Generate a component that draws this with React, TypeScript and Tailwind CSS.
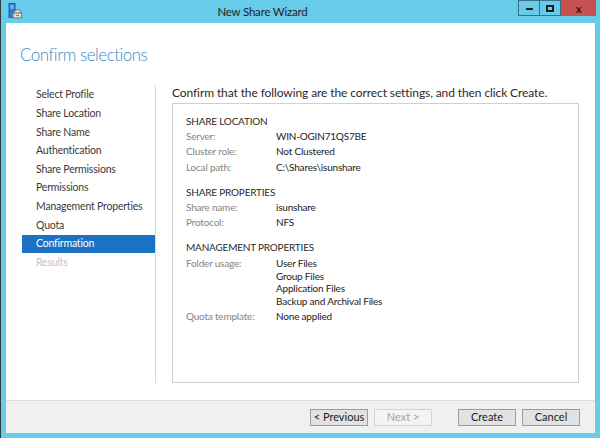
import React from "react";

const font = { fontFamily: 'Lato, "Noto Sans", Arial, sans-serif' };

const steps = [
  "Select Profile",
  "Share Location",
  "Share Name",
  "Authentication",
  "Share Permissions",
  "Permissions",
  "Management Properties",
  "Quota",
  "Confirmation",
  "Results",
];

interface Row {
  label: string;
  values: string[];
}

interface Section {
  title: string;
  rows: Row[];
}

const sections: Section[] = [
  {
    title: "SHARE LOCATION",
    rows: [
      { label: "Server:", values: ["WIN-OGIN71QS7BE"] },
      { label: "Cluster role:", values: ["Not Clustered"] },
      { label: "Local path:", values: ["C:\\Shares\\isunshare"] },
    ],
  },
  {
    title: "SHARE PROPERTIES",
    rows: [
      { label: "Share name:", values: ["isunshare"] },
      { label: "Protocol:", values: ["NFS"] },
    ],
  },
  {
    title: "MANAGEMENT PROPERTIES",
    rows: [
      {
        label: "Folder usage:",
        values: ["User Files", "Group Files", "Application Files", "Backup and Archival Files"],
      },
      { label: "Quota template:", values: ["None applied"] },
    ],
  },
];

const AppIcon = () => (
  <svg width="14" height="16" viewBox="0 0 14 16">
    <rect x="1" y="0.5" width="6" height="14" fill="#2f7fd0" stroke="#1d5fa8" />
    <rect x="2.5" y="2.5" width="3" height="1" fill="#cfe8ff" />
    <rect x="2.5" y="4.5" width="3" height="1" fill="#cfe8ff" />
    <path d="M5 10 L8 7 H12 L13.5 10 Z" fill="#e8e8e8" stroke="#7a7a7a" />
    <rect x="5" y="10" width="8.5" height="5" fill="#d8d8d8" stroke="#7a7a7a" />
    <rect x="8" y="12" width="3" height="1" fill="#7a7a7a" />
  </svg>
);

const Button = ({ label, disabled }: { label: string; disabled?: boolean }) => (
  <div
    className={
      disabled
        ? "flex h-[17px] w-[58px] items-center justify-center whitespace-nowrap border border-[#d3d3d3] bg-[#f4f4f4] text-[11px] text-[#a3a3a3]"
        : "flex h-[17px] w-[58px] items-center justify-center whitespace-nowrap border border-[#9c9c9c] bg-[#e2e2e2] text-[11px] text-[#222]"
    }
  >
    {label}
  </div>
);

export default function App() {
  return (
    <div
      className="flex h-[438px] w-[600px] flex-col overflow-hidden border-l border-[#2d3a40] bg-[#67cbea]"
      style={font}
    >
      {/* title bar */}
      <div className="flex h-[23px] shrink-0 items-start">
        <div className="pl-[7px] pt-[3px]">
          <AppIcon />
        </div>
        <div className="flex-1 pr-[15px] pt-[4px] text-center text-[11.5px] leading-[15px] tracking-[-0.2px] text-[#1e1e1e]">
          New Share Wizard
        </div>
        <div className="flex h-[16px] pr-[4px]">
          <div className="flex w-[21px] items-end justify-center border border-r-0 border-[#3a6f86] pb-[5px]">
            <div className="h-[2px] w-[7px] bg-[#1e1e1e]" />
          </div>
          <div className="flex w-[22px] items-center justify-center border border-[#3a6f86]">
            <div className="h-[7px] w-[8px] border-2 border-[#1e1e1e]" />
          </div>
          <div className="flex w-[35px] items-center justify-center bg-[#c75050] text-[11px] font-bold leading-none text-[#1e1e1e]">
            x
          </div>
        </div>
      </div>

      {/* client area */}
      <div className="ml-[5px] mr-[5px] flex flex-1 flex-col bg-white">
        <div className="h-[62px] shrink-0 pl-[14px] pt-[20px] text-[17px] font-light leading-[24px] tracking-[-0.5px] text-[#3a8bc5]">
          Confirm selections
        </div>

        <div className="flex flex-1">
          <div className="mb-[17px] w-[150px] shrink-0 border-r border-[#d8d8d8] pl-[16px] pt-[1px]">
            {steps.map((s) => (
              <div
                key={s}
                className={
                  s === "Confirmation"
                    ? "flex h-[18.6px] items-center whitespace-nowrap bg-[#1b72c4] pl-[14px] text-[10.5px] tracking-[-0.2px] text-white"
                    : s === "Results"
                    ? "flex h-[18.6px] items-center whitespace-nowrap pl-[14px] text-[10.5px] tracking-[-0.2px] text-[#c4c4c4]"
                    : "flex h-[18.6px] items-center whitespace-nowrap pl-[14px] text-[10.5px] tracking-[-0.2px] text-[#3a3a3a]"
                }
              >
                {s}
              </div>
            ))}
          </div>

          <div className="flex flex-1 flex-col pb-[17px] pl-[16px] pr-[16px]">
            <div className="h-[18px] whitespace-nowrap text-[12px] leading-[16px] tracking-[-0.1px] text-[#2a2a2a]">
              Confirm that the following are the correct settings, and then click Create.
            </div>
            <div className="flex-1 border border-[#d0d0d0] pl-[13px] pt-[10px] text-[10px] tracking-[-0.2px]">
              {sections.map((sec, i) => (
                <div key={sec.title} className={i === 0 ? "" : "mt-[10px]"}>
                  <div className="whitespace-nowrap leading-[15.2px] text-[#2a2a2a]">{sec.title}</div>
                  {sec.rows.map((r) => (
                    <div key={r.label} className="flex">
                      <div className="w-[90px] shrink-0 whitespace-nowrap leading-[15.2px] text-[#858585]">
                        {r.label}
                      </div>
                      {r.values.length > 1 ? (
                        <div className="pb-[2px] pt-[1.5px] text-[#222]">
                          {r.values.map((v) => (
                            <div key={v} className="whitespace-nowrap leading-[12.5px]">
                              {v}
                            </div>
                          ))}
                        </div>
                      ) : (
                        <div className="whitespace-nowrap leading-[15.2px] text-[#222]">{r.values[0]}</div>
                      )}
                    </div>
                  ))}
                </div>
              ))}
            </div>
          </div>
        </div>

        <div className="flex h-[33px] shrink-0 items-center justify-end border-t border-[#dcdcdc] bg-[#f0f0f0] pr-[15px]">
          <div className="flex gap-[6px]">
            <Button label="< Previous" />
            <Button label="Next >" disabled />
          </div>
          <div className="ml-[26px] flex gap-[6px]">
            <Button label="Create" />
            <Button label="Cancel" />
          </div>
        </div>
      </div>
      <div className="h-[5px] shrink-0" />
    </div>
  );
}
